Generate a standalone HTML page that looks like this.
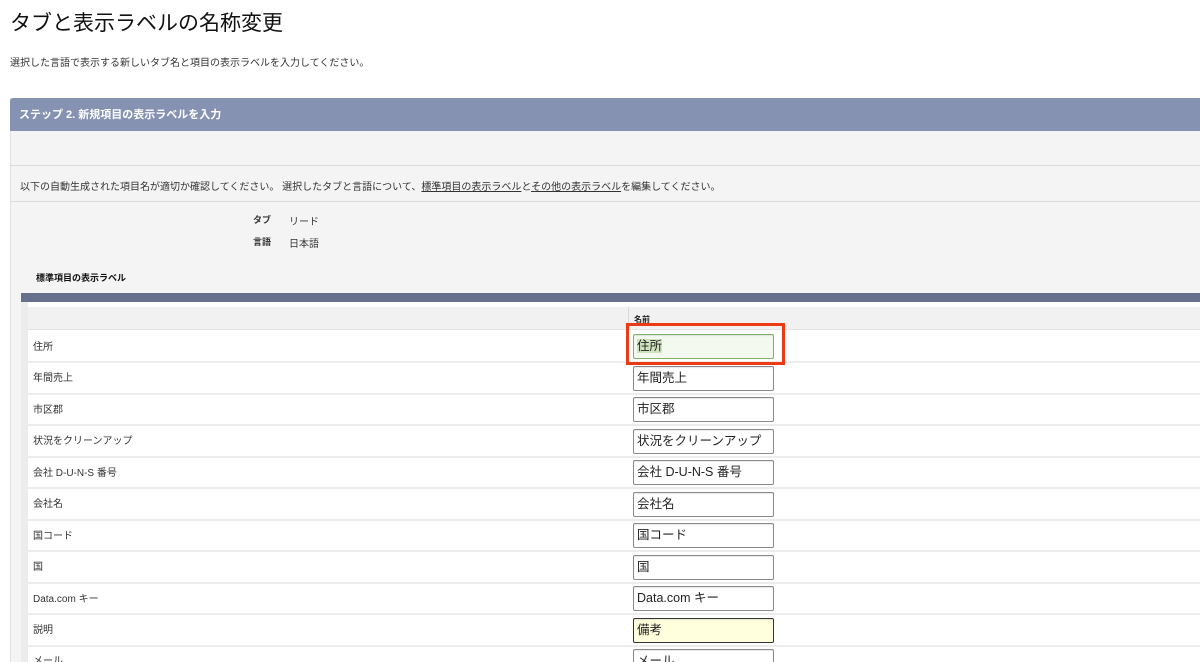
<!DOCTYPE html>
<html><head><meta charset="utf-8"><style>
*{margin:0;padding:0;box-sizing:border-box}
html,body{width:1200px;height:662px;overflow:hidden}
body{background:#fff;font-family:"Liberation Sans","Noto Sans CJK JP",sans-serif;color:#222;position:relative}
.a{position:absolute;white-space:nowrap}
.inp{position:absolute;left:633px;width:141px;height:25px;border:1px solid #8a8a8a;border-radius:2px;background:#fff;font-size:12.5px;line-height:22px;padding-left:3px;color:#222;box-shadow:inset 0 1px 1px rgba(0,0,0,.1)}
.lbl{position:absolute;left:33px;font-size:10px;color:#333;line-height:12px;margin-top:2px}
.sep{position:absolute;left:28px;right:0;height:2px;background:#ececec}
</style></head><body>
<div class="a" style="left:10px;top:7px;font-size:21px;color:#111">タブと表示ラベルの名称変更</div>
<div class="a" style="left:10px;top:54px;font-size:10px;color:#333">選択した言語で表示する新しいタブ名と項目の表示ラベルを入力してください。</div>

<div class="a" style="left:10px;top:98px;right:0;height:564px;background:#f4f4f4;border-left:1px solid #e2e2e2"></div>
<div class="a" style="left:10px;top:98px;right:0;height:33px;background:#8592b2;border-radius:3px 0 0 0"></div>
<div class="a" style="left:19px;top:106px;font-size:11px;font-weight:bold;color:#fff">ステップ 2. 新規項目の表示ラベルを入力</div>
<div class="a" style="left:10px;top:165px;right:0;height:1px;background:#dcdcdc"></div>
<div class="a" style="left:20px;top:178px;font-size:10px;color:#333">以下の自動生成された項目名が適切か確認してください。 選択したタブと言語について、<u>標準項目の表示ラベル</u>と<u>その他の表示ラベル</u>を編集してください。</div>
<div class="a" style="left:10px;top:201px;right:0;height:1px;background:#dcdcdc"></div>
<div class="a" style="left:253px;top:213px;font-size:9px;font-weight:bold;color:#333">タブ</div>
<div class="a" style="left:289px;top:213px;font-size:10px;color:#333">リード</div>
<div class="a" style="left:253px;top:235px;font-size:9px;font-weight:bold;color:#333">言語</div>
<div class="a" style="left:289px;top:235px;font-size:10px;color:#333">日本語</div>
<div class="a" style="left:36px;top:271px;font-size:9px;font-weight:bold;color:#111">標準項目の表示ラベル</div>

<div class="a" style="left:21px;top:293px;right:0;height:9px;background:#666f8b"></div>
<div class="a" style="left:21px;top:302px;width:7px;height:360px;background:#ececec"></div>
<div class="a" style="left:28px;top:302px;right:0;height:360px;background:#fff"></div>
<div class="a" style="left:28px;top:307px;right:0;height:23px;background:#f1f1f1;border-bottom:1px solid #e3e3e3"></div>
<div class="a" style="left:628px;top:307px;width:1px;height:23px;background:#dadada"></div>
<div class="a" style="left:634px;top:314px;font-size:8px;font-weight:bold;color:#222">名前</div>

<div class="sep" style="top:361px"></div><div class="sep" style="top:393px"></div><div class="sep" style="top:424px"></div><div class="sep" style="top:456px"></div><div class="sep" style="top:487px"></div><div class="sep" style="top:519px"></div><div class="sep" style="top:550px"></div><div class="sep" style="top:582px"></div><div class="sep" style="top:613px"></div><div class="sep" style="top:645px"></div>

<div class="lbl" style="top:340px">住所</div>
<div class="lbl" style="top:371px">年間売上</div>
<div class="lbl" style="top:403px">市区郡</div>
<div class="lbl" style="top:434px">状況をクリーンアップ</div>
<div class="lbl" style="top:466px">会社 D-U-N-S 番号</div>
<div class="lbl" style="top:497px">会社名</div>
<div class="lbl" style="top:529px">国コード</div>
<div class="lbl" style="top:560px">国</div>
<div class="lbl" style="top:592px">Data.com キー</div>
<div class="lbl" style="top:623px">説明</div>
<div class="lbl" style="top:654px">メール</div>

<div class="inp" style="top:334px;border-color:#7fb26a;background:#f4f9f0"><span style="background:#cfe3bf">住所</span></div>
<div class="inp" style="top:366px">年間売上</div>
<div class="inp" style="top:397px">市区郡</div>
<div class="inp" style="top:429px">状況をクリーンアップ</div>
<div class="inp" style="top:460px">会社 D-U-N-S 番号</div>
<div class="inp" style="top:492px">会社名</div>
<div class="inp" style="top:523px">国コード</div>
<div class="inp" style="top:555px">国</div>
<div class="inp" style="top:586px">Data.com キー</div>
<div class="inp" style="top:618px;background:#ffffdd;border-color:#333">備考</div>
<div class="inp" style="top:649px">メール</div>

<div class="a" style="left:626px;top:323px;width:159px;height:42px;border:3px solid #ec3a17"></div>
</body></html>
